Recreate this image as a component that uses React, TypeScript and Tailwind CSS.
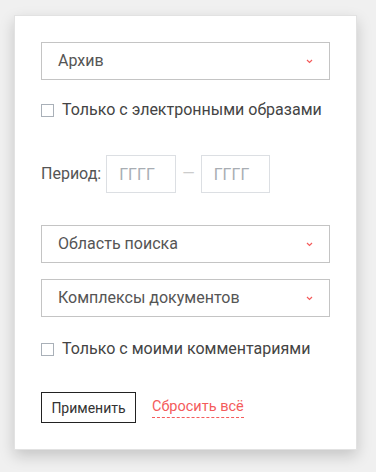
import { useState } from "react";

const font = { fontFamily: "Roboto, 'Liberation Sans', sans-serif" };

function Chevron() {
  return (
    <svg width="7" height="5" viewBox="0 0 7 5" className="text-[#f45b5b]">
      <path d="M1 1l2.5 2.5L6 1" fill="none" stroke="currentColor" strokeWidth="1.2" />
    </svg>
  );
}

function Select({ label }: { label: string }) {
  return (
    <button
      type="button"
      className="flex h-[38px] w-full items-center justify-between border border-[#c4c4c4] bg-white pl-4 pr-[16px] text-left text-base text-[#555]"
    >
      <span>{label}</span>
      <Chevron />
    </button>
  );
}

function Check({ label }: { label: string }) {
  const [on, setOn] = useState(false);
  return (
    <label className="flex items-center gap-2 text-base text-[#444]">
      <input
        type="checkbox"
        checked={on}
        onChange={() => setOn(!on)}
        className="h-[13px] w-[13px] appearance-none border border-[#a9b0b8] bg-white"
      />
      <span>{label}</span>
    </label>
  );
}

export default function App() {
  return (
    <div className="min-h-screen w-full bg-[#f0f0f0] pl-[14px] pt-[15px]" style={font}>
      <div className="w-[343px] border border-[#e2e2e2] bg-white px-[26px] pb-[26px] pt-[26px] shadow-[0_6px_14px_rgba(0,0,0,0.18)]">
        <Select label="Архив" />

        <div className="mt-[18px]">
          <Check label="Только с электронными образами" />
        </div>

        <div className="mt-[33px] flex items-center text-base text-[#555]">
          <span>Период:</span>
          <input
            placeholder="ГГГГ"
            className="ml-[5px] h-[38px] w-[70px] border border-[#dcdfe3] px-3 text-base text-[#555] placeholder:text-[#a8adb3] outline-none"
          />
          <span className="mx-[6px] text-[#ccc]">—</span>
          <input
            placeholder="ГГГГ"
            className="h-[38px] w-[69px] border border-[#dcdfe3] px-3 text-base text-[#555] placeholder:text-[#a8adb3] outline-none"
          />
        </div>

        <div className="mt-[32px] flex flex-col gap-[16px]">
          <Select label="Область поиска" />
          <Select label="Комплексы документов" />
        </div>

        <div className="mt-[20px]">
          <Check label="Только с моими комментариями" />
        </div>

        <div className="mt-[31px] flex items-center gap-4">
          <button
            type="button"
            className="h-[31px] w-[95px] border border-[#222] bg-white text-sm text-[#333]"
          >
            Применить
          </button>
          <button
            type="button"
            className="border-b border-dashed border-[#f45b5b] text-[14.5px] leading-5 text-[#f45b5b]"
          >
            Сбросить всё
          </button>
        </div>
      </div>
    </div>
  );
}
